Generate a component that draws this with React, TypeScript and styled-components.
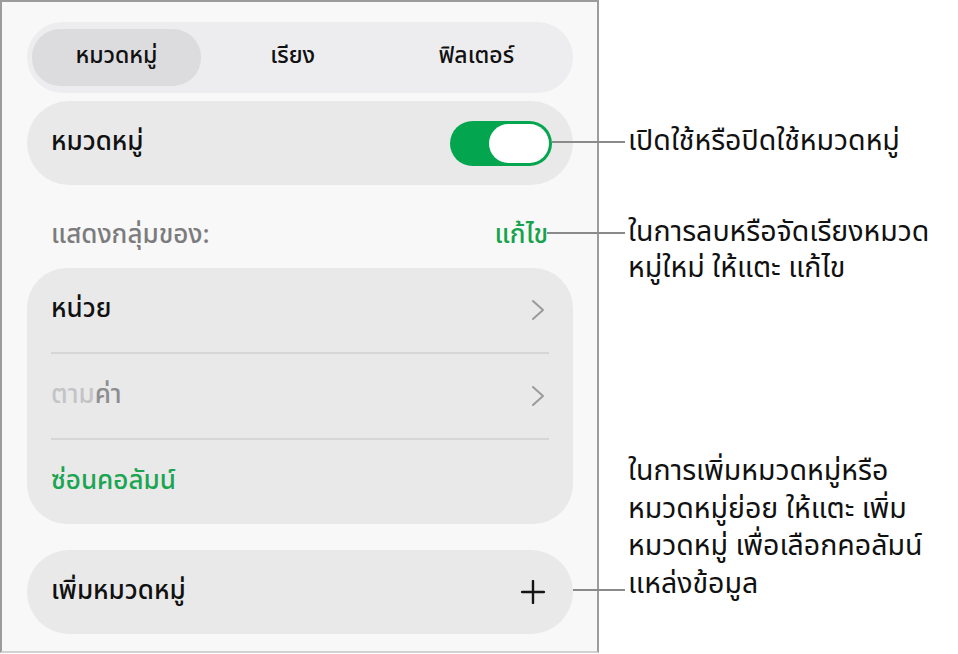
import React from "react";
import styled, { createGlobalStyle } from "styled-components";

const GlobalStyle = createGlobalStyle`
  html, body {
    margin: 0;
    background: #ffffff;
  }
  body {
    font-family: "Noto Sans Thai", "Noto Sans", "DejaVu Sans", sans-serif;
    color: #111111;
  }
`;

const Page = styled.div`
  display: flex;
  width: 958px;
  height: 654px;
`;

// left settings sheet
const Panel = styled.div`
  box-sizing: border-box;
  width: 599px;
  height: 653px;
  padding: 20px 24px 0 25px;
  background: #f8f8f8;
  border: 2px solid #9c9c9c;
  border-bottom-color: #d2d2d2;
  display: flex;
  flex-direction: column;
`;

const Segmented = styled.div`
  height: 71px;
  box-sizing: border-box;
  padding: 7px 5px;
  border-radius: 36px;
  background: #ededef;
  display: grid;
  grid-template-columns: 169px 1fr 1fr;
`;

const Segment = styled.div<{ $active?: boolean }>`
  display: flex;
  align-items: center;
  justify-content: center;
  padding-bottom: 4px;
  border-radius: 28px;
  font-size: 23px;
  font-weight: 500;
  background: ${(p) => (p.$active ? "#dcdcdf" : "transparent")};
`;

const Card = styled.div<{ $gap?: number }>`
  background: #e9e9ea;
  border-radius: 42px;
  margin-top: ${(p) => p.$gap ?? 8}px;
`;

const Row = styled.div`
  height: 84px;
  display: flex;
  align-items: center;
  justify-content: space-between;
  padding: 0 21px 0 24px;
  font-size: 26px;
  font-weight: 500;
`;

const Divider = styled.div`
  height: 2px;
  background: #d6d6d7;
  margin: 0 24px;
`;

const Label = styled.span<{ $tone?: "dim" | "green" }>`
  margin-bottom: 2px;
  color: ${(p) =>
    p.$tone === "dim" ? "#8e8e90" : p.$tone === "green" ? "#1aa550" : "#111111"};
`;

const Faint = styled.span`
  color: #c4c4c6;
`;

const SectionHead = styled.div`
  box-sizing: border-box;
  height: 83px;
  padding: 16px 25px 0 24px;
  display: flex;
  align-items: center;
  justify-content: space-between;
  font-size: 26px;
  font-weight: 500;
  color: #7c7c7e;
`;

const EditLink = styled.span`
  color: #16a34c;
`;

const Group = styled(Card)`
  border-radius: 40px;
`;

const Switch = styled.div`
  box-sizing: border-box;
  width: 102px;
  height: 45px;
  padding: 3px;
  border-radius: 23px;
  background: #03a64f;
  display: flex;
  justify-content: flex-end;
`;

const Knob = styled.div`
  width: 60px;
  height: 39px;
  border-radius: 20px;
  background: #ffffff;
`;

const Glyph = styled.svg`
  margin-right: 7px;
`;

// right-hand explanatory notes
const Notes = styled.div`
  flex: 1;
  display: flex;
  flex-direction: column;
  padding-left: 29px;
  font-size: 28.5px;
  color: #111111;
  white-space: nowrap;
`;

const Note = styled.div<{ $top: number; $lh?: number }>`
  margin-top: ${(p) => p.$top}px;
  line-height: ${(p) => p.$lh ?? 36}px;
`;

const Leader = styled.div<{ $top: number; $left: number; $width: number }>`
  position: absolute;
  top: ${(p) => p.$top}px;
  left: ${(p) => p.$left}px;
  width: ${(p) => p.$width}px;
  height: 2px;
  background: #8a8a8a;
`;

const Chevron = () => (
  <Glyph width="14" height="22" viewBox="0 0 14 22" fill="none">
    <path d="M2 2l10 9-10 9" stroke="#9b9b9d" strokeWidth="2" strokeLinecap="round" strokeLinejoin="round" />
  </Glyph>
);

const Plus = () => (
  <Glyph width="24" height="24" viewBox="0 0 24 24" fill="none">
    <path d="M12 1v22M1 12h22" stroke="#151515" strokeWidth="2.4" strokeLinecap="round" />
  </Glyph>
);

export default function App() {
  return (
    <>
      <GlobalStyle />
      <Page>
        <Panel>
          <Segmented>
            <Segment $active>หมวดหมู่</Segment>
            <Segment>เรียง</Segment>
            <Segment>ฟิลเตอร์</Segment>
          </Segmented>

          <Card>
            <Row>
              <Label>หมวดหมู่</Label>
              <Switch>
                <Knob />
              </Switch>
            </Row>
          </Card>

          <SectionHead>
            <span>แสดงกลุ่มของ:</span>
            <EditLink>แก้ไข</EditLink>
          </SectionHead>

          <Group $gap={0}>
            <Row>
              <Label>หน่วย</Label>
              <Chevron />
            </Row>
            <Divider />
            <Row>
              <Label $tone="dim">
                <Faint>ตาม</Faint>ค่า
              </Label>
              <Chevron />
            </Row>
            <Divider />
            <Row>
              <Label $tone="green">ซ่อนคอลัมน์</Label>
            </Row>
          </Group>

          <Card $gap={26}>
            <Row>
              <Label>เพิ่มหมวดหมู่</Label>
              <Plus />
            </Row>
          </Card>
        </Panel>

        <Notes>
          <Note $top={124}>เปิดใช้หรือปิดใช้หมวดหมู่</Note>
          <Note $top={55}>
            ในการลบหรือจัดเรียงหมวด
            <br />
            หมู่ใหม่ ให้แตะ แก้ไข
          </Note>
          <Note $top={166} $lh={37.5}>
            ในการเพิ่มหมวดหมู่หรือ
            <br />
            หมวดหมู่ย่อย ให้แตะ เพิ่ม
            <br />
            หมวดหมู่ เพื่อเลือกคอลัมน์
            <br />
            แหล่งข้อมูล
          </Note>
        </Notes>

        <Leader $top={141} $left={552} $width={73} />
        <Leader $top={232} $left={547} $width={78} />
        <Leader $top={589} $left={573} $width={52} />
      </Page>
    </>
  );
}
